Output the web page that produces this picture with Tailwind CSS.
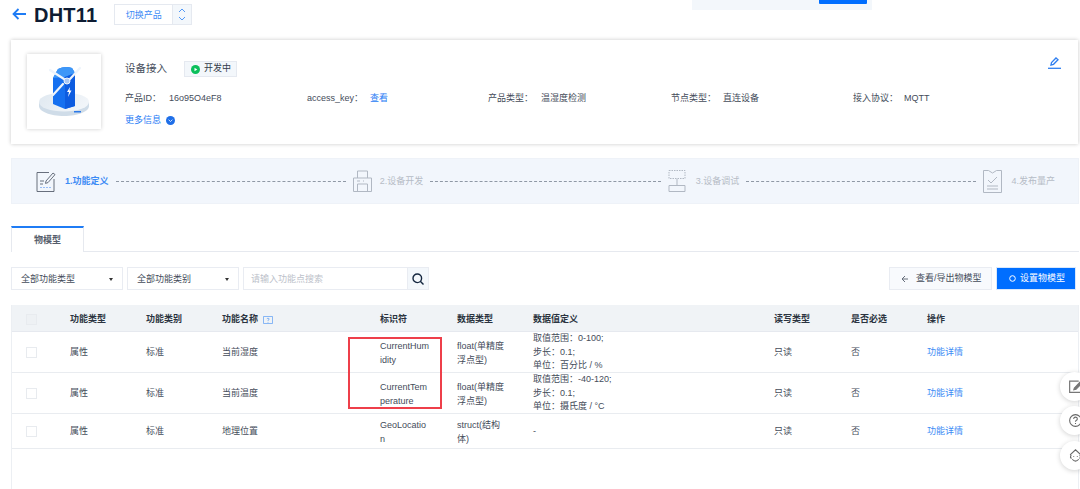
<!DOCTYPE html>
<html lang="zh-CN">
<head>
    <meta charset="UTF-8">
    <title>DHT11</title>
    <script src="https://cdn.jsdelivr.net/npm/@tailwindcss/browser@4"></script>
</head>
<body class="relative w-[1080px] h-[489px] overflow-hidden bg-white text-[9px] text-[#444c5a] font-['Liberation_Sans','Noto_Sans_CJK_SC',sans-serif]">

    <!-- cut-off notice at the top edge -->
    <div class="absolute left-[692px] top-0 w-[180px] h-[10px] bg-[#f3f7fb]">
        <div class="absolute left-[127px] top-0 w-[48px] h-[4px] bg-[#006eff] rounded-b-[1px]"></div>
    </div>

    <!-- title -->
    <header class="h-[40px] pl-[12px] flex items-start">
        <svg class="mt-[8px] w-[14px] h-[12px]" viewBox="0 0 14 12" fill="none" stroke="#1f7cf5" stroke-width="1.8">
            <path d="M14 6H1.500M6.500 1 1.500 6l5 5"/>
        </svg>
        <h1 class="ml-[8px] mt-[4px] text-[20px] leading-[23px] font-bold text-[#0e1c33] tracking-[0.2px]">DHT11</h1>
        <div class="ml-[17px] mt-[4px] w-[78px] h-[21px] flex border border-[#e5e9f0]">
            <span class="w-[57px] text-center leading-[20px] text-[#3d8bf5]">切换产品</span>
            <span class="flex-1 border-l border-[#e5e9f0] bg-[#f3f7fb] flex items-center justify-center">
                <svg class="w-[8px] h-[15px]" viewBox="0 0 8 15" fill="none" stroke="#3d8bf5" stroke-width="0.9">
                    <path d="M1 5 4 2l3 3M1 10l3 3 3-3"/>
                </svg>
            </span>
        </div>
    </header>

    <!-- product card -->
    <section class="ml-[11px] w-[1067px] h-[104px] pl-[16px] pt-[14px] flex shadow-[0_0_4px_rgba(0,0,0,0.22)]">
        <div class="w-[74px] h-[75px] shadow-[0_0_4px_rgba(0,0,0,0.2)] shrink-0">
            <svg viewBox="0 0 74 75" class="w-full h-full">
                <defs>
                    <linearGradient id="disc" x1="0" y1="0" x2="1" y2="0.4">
                        <stop offset="0" stop-color="#dfe8f0"/>
                        <stop offset="1" stop-color="#f1f5f9"/>
                    </linearGradient>
                </defs>
                <path d="M12 48v4c0 5.500 11 10 25 10s25-4.500 25-10v-4z" fill="#cfdce8"/>
                <ellipse cx="37" cy="48" rx="25" ry="9.500" fill="url(#disc)"/>
                <path d="M26 24 31 15q7-3.500 14-1l3 5v33l-10 3-12-5z" fill="#1570f0"/>
                <path d="M26 24 31 15q7-3.500 14-1l3 5-10 4z" fill="#3d97f8"/>
                <path d="M38 23l10-4v33l-10 3z" fill="#0d5ce0"/>
                <path d="M23 16 37 25M53 14 43 25M36 30 26 41" stroke="#eef4fc" stroke-width="2.200" stroke-linecap="round"/>
                <circle cx="40" cy="27" r="3" fill="#a9c8f5" stroke="#eef4fc"/>
                <path d="M43 33l-3 5h2l-1 5 3.500-6.500h-2z" fill="#fff"/>
                <rect x="47" y="57" width="7" height="1.500" fill="#2c78e8"/>
            </svg>
        </div>
        <div class="ml-[24px] flex-1">
            <div class="flex items-center h-[24px] mt-[3px]">
                <span class="w-[59px] text-[10.500px] text-[#444c5a]">设备接入</span>
                <span class="w-[53px] h-[16px] flex items-center bg-[#f3f7fb] border border-[#e5e9f0] pl-[6px]">
                    <svg class="w-[9px] h-[9px]" viewBox="0 0 9 9"><circle cx="4.500" cy="4.500" r="4.500" fill="#0abf5b"/><path d="M3.500 2.700v3.600l2.800-1.800z" fill="#fff"/></svg>
                    <span class="ml-[4px] text-[#333c4a]">开发中</span>
                </span>
            </div>
            <div class="mt-[10px] grid grid-cols-[182px_181px_183px_182px_1fr] leading-[14px]">
                <div class="flex"><span class="w-[44px] whitespace-nowrap">产品ID&#65306;</span><span>16o95O4eF8</span></div>
                <div class="flex"><span class="w-[63px] whitespace-nowrap">access_key&#65306;</span><span class="text-[#1f7cf5]">查看</span></div>
                <div class="flex"><span class="w-[53px] whitespace-nowrap">产品类型&#65306;</span><span>温湿度检测</span></div>
                <div class="flex"><span class="w-[52px] whitespace-nowrap">节点类型&#65306;</span><span>直连设备</span></div>
                <div class="flex"><span class="w-[51px] whitespace-nowrap">接入协议&#65306;</span><span>MQTT</span></div>
            </div>
            <div class="mt-[8px] flex items-center text-[#1f7cf5] leading-[14px]">
                更多信息
                <svg class="ml-[5px] w-[9px] h-[9px]" viewBox="0 0 9 9"><circle cx="4.500" cy="4.500" r="4.500" fill="#1f6fe8"/><path d="M2.600 3.700 4.500 5.500l1.900-1.800" fill="none" stroke="#fff" stroke-width="0.8"/></svg>
            </div>
        </div>
        <svg class="mr-[17px] mt-[3px] w-[13px] h-[12px] shrink-0" viewBox="0 0 13 12" fill="none" stroke="#2f7ff0" stroke-width="1.300">
            <path d="M3 8 3.500 5.500 8 1l2 1.700-4.500 4.600z"/><path d="M0 11.300h13"/>
        </svg>
    </section>

    <!-- steps -->
    <section class="ml-[11px] mt-[14px] w-[1068px] h-[46px] bg-[#f2f6fc] border border-[#eef2f8] flex items-center pl-[24px] pr-[23px]">
        <svg class="w-[20px] h-[23px] shrink-0" viewBox="0 0 20 23" fill="none" stroke="#58606e" stroke-width="0.9">
            <path d="M13 2.500H1v19h17V9"/><path d="M10 11 17 3l2 1.600-7 8-2.500.8z"/><path d="M4 11h4M4 14h3"/><path d="M4 17.500h12" stroke="#8fb8f5" stroke-dasharray="2 1"/>
        </svg>
        <span class="ml-[9px] mt-[2px] font-bold text-[#3d8bf5] whitespace-nowrap">1.功能定义</span>
        <span class="mx-[7px] flex-1 border-t border-dashed border-[#8f98a5]"></span>
        <svg class="w-[19px] h-[22px] shrink-0" viewBox="0 0 19 22" fill="none" stroke="#b1b8c3">
            <path d="M4.500 8V1h10v7M.5 8h18v13.500H.5zM4.500 21.500V14h10v7.500M4 11h3M10 11h1"/>
        </svg>
        <span class="ml-[8px] mt-[2px] text-[#b6bcc6] whitespace-nowrap">2.设备开发</span>
        <span class="mx-[7px] flex-1 border-t border-dashed border-[#8f98a5]"></span>
        <svg class="w-[18px] h-[22px] shrink-0" viewBox="0 0 18 22" fill="none" stroke="#b1b8c3">
            <path d="M1 .5h16v8H1z" stroke-dasharray="1.500 1"/><path d="M9 9v6M1 15.500h16v6H1z"/>
        </svg>
        <span class="ml-[10px] mt-[2px] text-[#b6bcc6] whitespace-nowrap">3.设备调试</span>
        <span class="mx-[7px] flex-1 border-t border-dashed border-[#8f98a5]"></span>
        <svg class="w-[19px] h-[23px] shrink-0" viewBox="0 0 19 23" fill="none" stroke="#b1b8c3">
            <path d="M.5.5h5L9.500 3l4-2.500h5v22H.5z"/><path d="M5 10l3 3 6-6M4 16h11M4 19h11"/>
        </svg>
        <span class="ml-[9px] mt-[2px] text-[#b6bcc6] whitespace-nowrap">4.发布量产</span>
    </section>

    <!-- tabs -->
    <nav class="mt-[22px] ml-[11px] w-[1068px] h-[26px] border-b border-[#e6e9ef] flex">
        <div class="w-[73px] h-[26px] border-t-2 border-t-[#1f7cf5] border-x border-x-[#e6e9ef] bg-white text-center leading-[25px] font-bold text-[#555d6b]">物模型</div>
    </nav>

    <!-- filters -->
    <div class="mt-[15px] ml-[11px] mr-[4px] flex h-[23px]">
        <div class="w-[112px] flex items-center justify-between border border-[#e9ecf2] pl-[9px] pr-[9px] pt-[2px]">
            全部功能类型
            <span class="border-x-[2.500px] border-x-transparent border-t-[3px] border-t-[#333]"></span>
        </div>
        <div class="ml-[4px] w-[112px] flex items-center justify-between border border-[#e9ecf2] pl-[9px] pr-[9px] pt-[2px]">
            全部功能类别
            <span class="border-x-[2.500px] border-x-transparent border-t-[3px] border-t-[#333]"></span>
        </div>
        <div class="ml-[4px] w-[165px] flex items-center border border-[#e9ecf2] pl-[7px] pt-[2px] text-[#bcc1ca]">请输入功能点搜索</div>
        <div class="w-[21px] flex items-center justify-center border border-l-0 border-[#e9ecf2] bg-[#f3f7fb]">
            <svg class="w-[12px] h-[12px]" viewBox="0 0 12 12" fill="none" stroke="#14263f" stroke-width="1.400">
                <circle cx="5.300" cy="5.300" r="4.300"/><path d="M8.300 8.300 11.500 11.500"/>
            </svg>
        </div>
        <div class="ml-auto w-[103px] flex items-center border border-[#e9ecf2] bg-[#f8fafd] pl-[11px] text-[#444c5a]">
            <svg class="w-[8px] h-[8px] mr-[7px]" viewBox="0 0 8 8" fill="none" stroke="#666e7b"><path d="M7 4H2M4 1 1 4l3 3"/></svg>
            <span class="pt-[1px]">查看/导出物模型</span>
        </div>
        <div class="ml-[4px] w-[80px] flex items-center bg-[#006eff] border border-[#d9e8fc] pl-[12px] text-white">
            <svg class="w-[7px] h-[7px] mr-[4px]" viewBox="0 0 7 7" fill="none" stroke="#fff"><circle cx="3.500" cy="3.500" r="2.800"/></svg>
            <span class="pt-[1px]">设置物模型</span>
        </div>
    </div>

    <!-- table -->
    <section class="absolute left-[11px] top-[305px] bottom-0 w-[1068px] border-x border-[#eceff3]">
        <div class="grid grid-cols-[58px_76px_76px_158px_77px_76px_241px_77px_76px_1fr] h-[27px] pt-[3px] items-center bg-[#f0f3f6] border-b border-[#e6e9ef] font-bold text-[#2b3340]">
            <span class="pl-[14px]"><span class="block w-[11px] h-[11px] border border-[#e8ebef] bg-[#eef1f4]"></span></span>
            <span>功能类型</span>
            <span>功能类别</span>
            <span class="flex items-center">功能名称
                <svg class="ml-[5px] w-[10px] h-[8px]" viewBox="0 0 10 8" fill="none" stroke="#5a9cf5" stroke-width="0.7"><path d="M.5.5h9v7h-9z"/><path d="M3.800 2.800q1.200-1.400 2.400 0 0 1-1.200 1.500v.8M5 6v.7"/></svg>
            </span>
            <span>标识符</span>
            <span>数据类型</span>
            <span>数据值定义</span>
            <span>读写类型</span>
            <span>是否必选</span>
            <span>操作</span>
        </div>

        <div class="grid grid-cols-[58px_76px_76px_158px_77px_76px_241px_77px_76px_1fr] h-[41px] pt-[1px] items-center border-b border-[#e9ecf0]">
            <span class="pl-[14px]"><span class="block w-[11px] h-[11px] border border-[#e8ebef]"></span></span>
            <span>属性</span>
            <span>标准</span>
            <span>当前湿度</span>
            <span class="w-[50px] break-all leading-[14px]">CurrentHumidity</span>
            <span class="w-[50px] leading-[14px]">float(单精度浮点型)</span>
            <span class="-mt-[1px] leading-[13.500px]">取值范围&#65306;0-100;<br>步长&#65306;0.1;<br>单位&#65306;百分比 / %</span>
            <span>只读</span>
            <span>否</span>
            <span class="text-[#3d8bf5]">功能详情</span>
        </div>

        <div class="grid grid-cols-[58px_76px_76px_158px_77px_76px_241px_77px_76px_1fr] h-[41px] pt-[1px] items-center border-b border-[#e9ecf0]">
            <span class="pl-[14px]"><span class="block w-[11px] h-[11px] border border-[#e8ebef]"></span></span>
            <span>属性</span>
            <span>标准</span>
            <span>当前温度</span>
            <span class="w-[50px] break-all leading-[14px]">CurrentTemperature</span>
            <span class="w-[50px] leading-[14px]">float(单精度浮点型)</span>
            <span class="-mt-[1px] leading-[13.500px]">取值范围&#65306;-40-120;<br>步长&#65306;0.1;<br>单位&#65306;摄氏度 / °C</span>
            <span>只读</span>
            <span>否</span>
            <span class="text-[#3d8bf5]">功能详情</span>
        </div>

        <div class="grid grid-cols-[58px_76px_76px_158px_77px_76px_241px_77px_76px_1fr] h-[35px] pt-[1px] items-center border-b border-[#e9ecf0]">
            <span class="pl-[14px]"><span class="block w-[11px] h-[11px] border border-[#e8ebef]"></span></span>
            <span>属性</span>
            <span>标准</span>
            <span>地理位置</span>
            <span class="w-[50px] break-all leading-[14px]">GeoLocation</span>
            <span class="w-[50px] leading-[14px]">struct(结构体)</span>
            <span>-</span>
            <span>只读</span>
            <span>否</span>
            <span class="text-[#3d8bf5]">功能详情</span>
        </div>
    </section>

    <!-- red highlight drawn over the identifier column -->
    <div class="absolute left-[348px] top-[337px] w-[94px] h-[72px] border-2 border-[#ee3f4a]"></div>

    <!-- floating side buttons -->
    <div class="absolute left-[1060px] top-[372px] w-[29px] h-[29px] rounded-full bg-white shadow-[0_1px_5px_rgba(0,0,0,0.18)] flex items-center pl-[9px]">
        <svg class="w-[14px] h-[13px] shrink-0" viewBox="0 0 13 12" fill="none" stroke="#777" stroke-width="1.100"><path d="M9 1H.6v10.400H12V6"/><path d="M5 7.500 11 1l1.500 1.300-6 6.300-2 .4z" fill="#777"/></svg>
    </div>
    <div class="absolute left-[1060px] top-[406px] w-[29px] h-[29px] rounded-full bg-white shadow-[0_1px_5px_rgba(0,0,0,0.18)] flex items-center pl-[9px]">
        <svg class="w-[13px] h-[13px] shrink-0" viewBox="0 0 12 12" fill="none" stroke="#666"><circle cx="6" cy="6" r="5.400"/><path d="M4.200 4.600q.4-1.800 1.900-1.700 1.700.2 1.600 1.600-.1 1-1.100 1.400-.6.3-.6 1.200M6 8.300v1"/></svg>
    </div>
    <div class="absolute left-[1060px] top-[441px] w-[29px] h-[29px] rounded-full bg-white shadow-[0_1px_5px_rgba(0,0,0,0.18)] flex items-center pl-[9px]">
        <svg class="w-[13px] h-[14px] shrink-0" viewBox="0 0 12 13" fill="none" stroke="#666"><path d="M1 5.500 6 .8l5 4.700M2 5.500q-1.500 3 .5 3M10 5.500q1.500 3-.5 3M3 9.500q3 3.500 6 0"/><path d="M4.300 6.500v.8M7.700 6.500v.8"/></svg>
    </div>

</body>
</html>
